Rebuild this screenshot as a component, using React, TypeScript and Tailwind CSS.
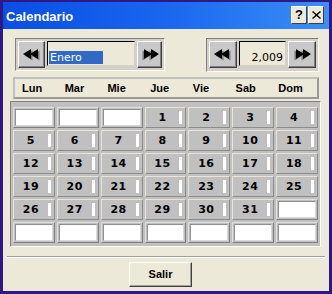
import React from "react";

const Arrow = ({ dir }: { dir: "l" | "r" }) => (
  <svg width="20" height="12" viewBox="0 0 20 12" style={{ transform: dir === "r" ? "scaleX(-1)" : undefined }}>
    <g fill="#7a7a7a" transform="translate(1.5,1.5)">
      <polygon points="1,5 9,0 9,10" />
      <polygon points="8,5 16,0 16,10" />
    </g>
    <g fill="#000">
      <polygon points="1,5 9,0 9,10" />
      <polygon points="8,5 16,0 16,10" />
    </g>
  </svg>
);

const NavBtn = ({ dir, w }: { dir: "l" | "r"; w: string }) => (
  <div
    className={`${w} h-[27px] flex items-center justify-center bg-[#c8c8c8] border border-t-white border-l-white border-r-[#404040] border-b-[#404040] shadow-[inset_-1px_-1px_0_#808080]`}
  >
    <Arrow dir={dir} />
  </div>
);

const days: (number | null)[] = [
  null, null, null, 1, 2, 3, 4,
  5, 6, 7, 8, 9, 10, 11,
  12, 13, 14, 15, 16, 17, 18,
  19, 20, 21, 22, 23, 24, 25,
  26, 27, 28, 29, 30, 31, null,
  null, null, null, null, null, null, null,
];

const Cell = ({ d }: { d: number | null }) =>
  d === null ? (
    <div className="h-[21px] bg-[#c0c0c0] border border-t-[#e0e0e0] border-l-[#e0e0e0] border-r-[#808080] border-b-[#808080] p-[1px]">
      <div className="w-full h-full bg-white border border-t-[#909090] border-l-[#909090] border-r-[#d8d8d8] border-b-[#d8d8d8]" />
    </div>
  ) : (
    <div className="h-[21px] bg-[#c0c0c0] border border-t-[#e8e4d8] border-l-[#e8e4d8] border-r-[#8c8c8c] border-b-[#8c8c8c] flex items-center">
      <span className="flex-1 text-center text-[11px] font-bold text-black leading-none tracking-[0.5px]" style={{ fontFamily: "'DejaVu Sans', sans-serif" }}>
        {d}
      </span>
      <div className="w-[3px] h-[13px] bg-white mr-[3px]" />
    </div>
  );

export default function App() {
  const dayNames = ["Lun", "Mar", "Mie", "Jue", "Vie", "Sab", "Dom"];
  return (
    <div className="w-[332px] h-[294px] bg-[#2f1884] pt-[2px] px-[3px] pb-[3px] flex flex-col" style={{ fontFamily: "'Liberation Sans', Arial, sans-serif" }}>
      {/* Title bar */}
      <div className="h-[27px] flex items-center justify-between bg-gradient-to-r from-[#0a4ee2] via-[#1a66f0] to-[#3b8ef5] pl-[3px] pr-[5px]">
        <span className="text-white font-bold text-[13px] leading-none mt-[1px]">Calendario</span>
        <div className="flex gap-[1px] mb-[2px]">
          <div className="w-[16px] h-[18px] bg-[#ece9d8] border border-t-white border-l-white border-r-[#404040] border-b-[#404040] flex items-center justify-center text-[13px] font-bold text-black leading-none">?</div>
          <div className="w-[16px] h-[18px] bg-[#ece9d8] border border-t-white border-l-white border-r-[#404040] border-b-[#404040] flex items-center justify-center">
            <svg width="9" height="8" viewBox="0 0 9 8">
              <path d="M1 0 L4.5 3 L8 0 L9 1 L5.5 4 L9 7 L8 8 L4.5 5 L1 8 L0 7 L3.5 4 L0 1 Z" fill="#000" />
            </svg>
          </div>
        </div>
      </div>
      {/* Body */}
      <div className="flex-1 bg-[#ece9d8] flex flex-col">
        {/* Nav */}
        <div className="mt-[9px] pl-[12px] pr-[10px] flex justify-between items-start">
          <div className="h-[33px] bg-[#d4d0c8] border border-t-[#808080] border-l-[#808080] border-r-white border-b-white p-[2px] flex gap-[2px] items-start">
            <NavBtn dir="l" w="w-[27px]" />
            <div className="w-[88px] h-[25px] bg-[#ece9d8] border border-t-black border-l-black border-r-[#d4d0c8] border-b-[#d4d0c8] pl-[1px] pt-[2px]">
              <span className="inline-block bg-[#316ac5] text-white text-[11px] leading-[13px] pl-[1px] w-[54px]" style={{ fontFamily: "'DejaVu Sans', sans-serif" }}>Enero</span>
            </div>
            <NavBtn dir="r" w="w-[25px]" />
          </div>
          <div className="h-[34px] bg-[#d4d0c8] border border-t-[#808080] border-l-[#808080] border-r-white border-b-white p-[2px] flex gap-[2px] items-start">
            <NavBtn dir="l" w="w-[28px]" />
            <div className="w-[47px] h-[25px] bg-[#ece9d8] border border-t-black border-l-black border-r-[#d4d0c8] border-b-[#d4d0c8] pr-[2px] pt-[2px] text-right">
              <span className="text-black text-[11px] leading-[13px]" style={{ fontFamily: "'DejaVu Sans', sans-serif" }}>2,009</span>
            </div>
            <NavBtn dir="r" w="w-[28px]" />
          </div>
        </div>
        {/* Day header */}
        <div className="mt-[5px] ml-[10px] w-[306px] h-[22px] bg-[#ece9d8] border-2 border-t-[#c0c0c0] border-l-[#c0c0c0] border-r-[#9a9a9a] border-b-[#9a9a9a] grid grid-cols-7 items-center pl-[3px]">
          {dayNames.map((n) => (
            <span key={n} className="text-[11px] font-bold text-black pl-[4px] leading-none">{n}</span>
          ))}
        </div>
        {/* Grid */}
        <div className="mt-[2px] ml-[7px] w-[311px] h-[146px] bg-[#c0c0c0] border border-t-[#808080] border-l-[#808080] border-r-white border-b-white pt-[5px] px-[2px] pb-[3px] grid grid-cols-7 gap-x-[2px] gap-y-[2px] content-start">
          {days.map((d, i) => (
            <Cell key={i} d={d} />
          ))}
        </div>
        {/* Separator */}
        <div className="mt-[9px] mx-[4px] h-[2px] border-t border-t-[#a0a0a0] border-b border-b-white" />
        {/* Button */}
        <div className="mt-[4px] ml-[126px]">
          <div className="w-[63px] h-[25px] bg-[#ece9d8] border border-t-white border-l-white border-r-[#404040] border-b-[#404040] shadow-[inset_-1px_-1px_0_#a0a0a0] flex items-center justify-center text-[11px] font-bold text-black">
            Salir
          </div>
        </div>
      </div>
    </div>
  );
}
